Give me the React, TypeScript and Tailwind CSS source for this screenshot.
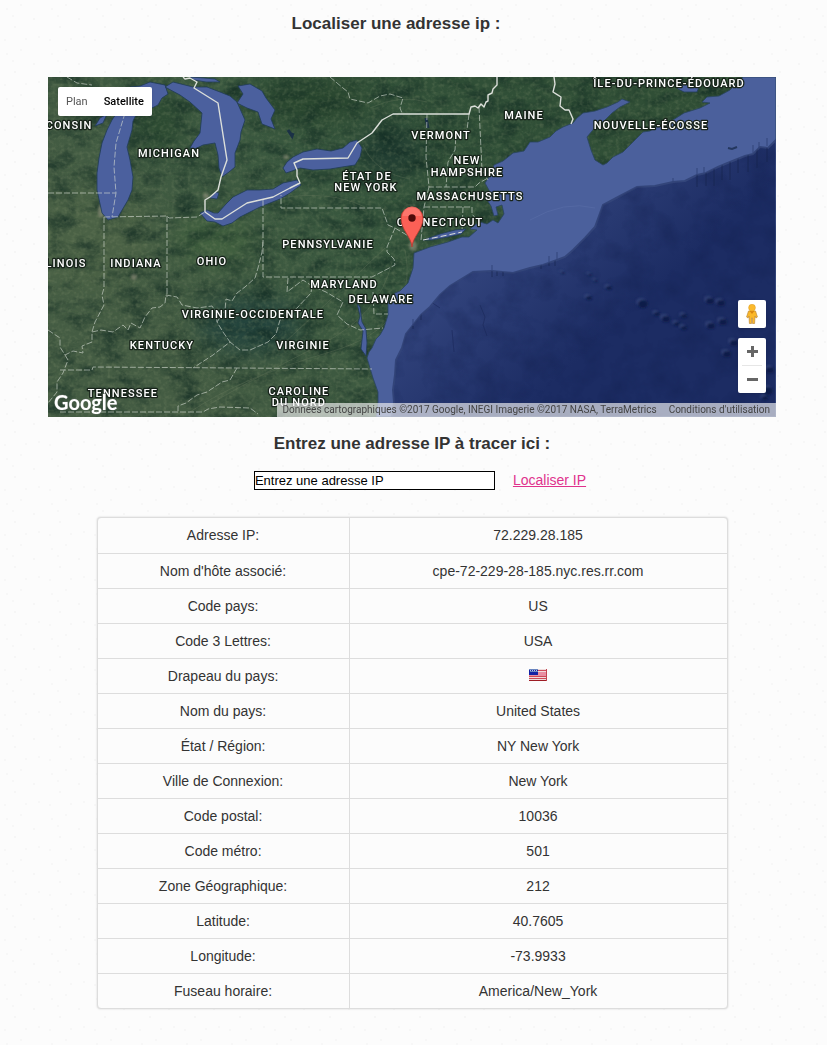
const LABELS: [string, number, number][] = [
  ['ÎLE-DU-PRINCE-ÉDOUARD', 669, 87],
  ['MAINE', 524, 119],
  ['NOUVELLE-ÉCOSSE', 651, 129],
  ['VERMONT', 441, 139],
  ['MICHIGAN', 169, 157],
  ['NEW', 467, 164],
  ['HAMPSHIRE', 467, 176],
  ['ÉTAT DE', 367, 180],
  ['NEW YORK', 366, 191],
  ['MASSACHUSETTS', 470, 200],
  ['CONNECTICUT', 440, 226],
  ['PENNSYLVANIE', 328, 248],
  ['INDIANA', 136, 267],
  ['OHIO', 212, 265],
  ['CONSIN', 69, 129],
  ['LINOIS', 66, 267],
  ['MARYLAND', 344, 288],
  ['DELAWARE', 381, 303],
  ['VIRGINIE-OCCIDENTALE', 253, 318],
  ['KENTUCKY', 162, 349],
  ['VIRGINIE', 303, 349],
  ['TENNESSEE', 123, 397],
  ['CAROLINE', 299, 395],
  ['DU NORD', 299, 406],
];

const LAKES = [
  'M108 220 L102 213 L97 190 L97 173 L99 158 L102 143 L107 130 L112 120 L122 105 L130 87 L140 86 L150 82 L165 85 L168 94 L162 98 L158 105 L148 110 L137 113 L133 121 L132 130 L127 147 L130 160 L133 177 L132 190 L128 200 L118 217 Z',
  'M95 126 L100 118 L107 114 L103 123 Z',
  'M165 87 L173 82 L193 87 L207 87 L220 92 L230 96 L237 102 L245 120 L241 132 L240 140 L235 153 L235 167 L229 172 L222 177 L219 168 L218 155 L215 143 L203 145 L195 149 L190 148 L194 141 L200 133 L202 113 L190 102 L180 95 Z',
  'M190 77 L204 78 L215 79 L220 82 L206 82 L194 80 Z',
  'M237 103 L243 94 L238 86 L250 84 L262 91 L266 98 L275 110 L271 119 L275 129 L262 124 L258 112 L247 108 Z',
  'M200 213 L207 210 L214 213 L218 213 L226 204 L233 197 L247 190 L260 190 L273 189 L283 183 L297 180 L301 185 L290 193 L280 199 L260 207 L240 217 L232 223 L223 226 L215 222 L207 221 Z',
  'M210 198 L215 192 L219 193 L217 199 Z',
  'M283 168 L287 162 L293 157 L303 152 L317 149 L331 151 L343 148 L350 142 L357 140 L362 148 L360 157 L355 165 L342 167 L330 169 L313 170 L300 168 L292 171 L286 173 Z',
];

const OCEAN =
  'M376 417 L378 402 L378 392 L373 378 L367 358 L369 352 L372 348 L376 339 L380 335 L384 328 L388 315 L388 302 L395 293 L400 291 L408 283 L413 268 L414 253 L430 247 L448 242 L462 237 L469 237 L477 230 L470 229 L473 226 L480 222 L487 224 L493 220 L498 223 L504 214 L502 205 L496 207 L498 215 L494 216 L491 206 L487 200 L490 192 L485 183 L491 174 L494 165 L503 161 L513 153 L524 151 L530 142 L538 142 L550 137 L556 131 L563 127 L573 123 L577 118 L583 113 L595 111 L607 107 L618 102 L622 99 L630 102 L620 107 L612 113 L604 121 L597 125 L587 137 L591 150 L595 160 L603 165 L607 163 L613 157 L623 152 L633 142 L643 132 L650 131 L658 125 L673 120 L684 113 L700 108 L710 103 L702 102 L707 97 L719 96 L730 90 L737 83 L743 77 L776 77 V417 Z';

const DEEP =
  'M776 140 L768 148 L760 147 L753 154 L745 156 L730 162 L718 167 L706 173 L697 175 L685 181 L673 182 L655 186 L637 187 L620 196 L603 205 L599 216 L595 227 L585 238 L573 250 L565 257 L557 260 L543 265 L530 268 L513 273 L492 271 L473 272 L463 278 L450 286 L440 295 L430 307 L421 315 L413 325 L406 334 L402 348 L396 360 L395 375 L393 390 L394 402 L392 417 H776 Z';

const STATE_LINES = [
  'M67 77 L77 83 L92 85',
  'M125 113 L116 143 L114 167 L116 193 L112 217',
  'M48 193 H116',
  'M104 217 L167 216 L169 218 L197 217 L205 212',
  'M104 217 V288 L102 295 L104 305 L95 322 L92 332',
  'M167 216 V297',
  'M48 330 L60 338 L60 347 L65 355 L73 351 L83 353 L82 346 L92 342 L92 332 L101 330 L113 332 L123 325 L128 330 L131 323 L140 328 L145 317 L152 308 L160 307 L165 303 L166 295 L177 297 L182 305 L197 308 L212 306 L216 312 L217 322 L223 332 L230 342',
  'M65 355 L68 360 L63 373 L57 382 L57 392 L48 403',
  'M217 322 L225 310 L226 299 L232 301 L237 293 L245 287 L255 278 L258 268 L262 252 L263 240',
  'M263 200 V277 H372 L395 265 L394 259 L387 252 L387 247 L395 228 L388 225 L382 208 H281 V195',
  'M395 228 L410 237',
  'M288 278 L287 292 L303 280 L312 286 L326 292 L343 302 L337 315 L347 324 L360 330 L383 328',
  'M312 286 L311 293 L297 308 L285 318 L280 320 L276 334 L268 342 L250 350 L240 350 L230 342 L213 355 L193 368',
  'M373 292 L374 314 H388',
  'M60 370 H92 L93 367 L237 368 L372 369',
  'M237 368 L230 380 L222 382 L207 392 L197 395 L186 403 L178 406 V412',
  'M60 412 H203 L208 409 L220 407 L250 408 L258 414',
  'M330 77 L343 88 L348 92 L350 99 L368 103 L380 96 L390 94 L403 98 L400 108 L402 113',
  'M427 114 L426 157 L429 187 H475 L479 183 L488 178',
  'M469 114 L467 130 L456 134 L455 150 L448 162 L446 187',
  'M479 107 L482 170 L488 180',
  'M429 187 L424 207 L421 240',
  'M424 207 H472 L472 214 L477 220',
  'M463 207 L462 231',
];

const BORDERS = [
  'M183 77 L185 79 L190 78 L197 82 L194 88 L218 103 L227 160 L221 177 L218 190 L210 197 L205 200 V212 L215 219 H222 L247 203 L273 197 L290 188 L300 183 L297 176 L297 170 L294 163 L303 159 L348 158 L357 143 L372 133 L382 120 L393 114 H469 L471 107 L475 106 L478 108 L481 104 L484 107 L486 102 L488 101 L488 95 L492 93 L493 89 L497 85 V77',
  'M554 77 L555 84 L553 92 L561 97 L560 106 L565 110 L569 110 L573 119 L571 124',
];

const SEAMOUNTS: [number, number, number][] = [
  [608, 287, 3], [589, 274, 2], [595, 280, 2], [642, 303, 5], [656, 313, 3],
  [665, 318, 4], [676, 323, 3], [683, 327, 3], [683, 315, 3], [709, 300, 4],
  [720, 302, 4], [710, 325, 4], [722, 321, 4], [733, 342, 4], [726, 353, 4],
  [562, 272, 2], [588, 297, 3], [767, 390, 5], [769, 369, 4], [764, 397, 3],
];

const ROWS: [string, string][] = [
  ['Adresse IP:', '72.229.28.185'],
  ["Nom d'hôte associé:", 'cpe-72-229-28-185.nyc.res.rr.com'],
  ['Code pays:', 'US'],
  ['Code 3 Lettres:', 'USA'],
  ['Drapeau du pays:', 'flag'],
  ['Nom du pays:', 'United States'],
  ['État / Région:', 'NY New York'],
  ['Ville de Connexion:', 'New York'],
  ['Code postal:', '10036'],
  ['Code métro:', '501'],
  ['Zone Géographique:', '212'],
  ['Latitude:', '40.7605'],
  ['Longitude:', '-73.9933'],
  ['Fuseau horaire:', 'America/New_York'],
];

function Terrain() {
  return (
    <svg
      viewBox="48 77 728 340"
      preserveAspectRatio="xMidYMid slice"
      className="block h-[340px] w-full bg-[#304f39]"
      aria-hidden="true"
    >
      <defs>
        <linearGradient id="land" x1="0" y1="0.3" x2="1" y2="0">
          <stop offset="0" stopColor="#445c43" />
          <stop offset="0.35" stopColor="#38573e" />
          <stop offset="0.6" stopColor="#304f37" />
          <stop offset="1" stopColor="#304e35" />
        </linearGradient>
        <linearGradient id="deep" gradientUnits="userSpaceOnUse" x1="480" y1="230" x2="590" y2="350">
          <stop offset="0" stopColor="#34467f" />
          <stop offset="1" stopColor="#1c2c63" />
        </linearGradient>
        <filter id="relief" x="0" y="0" width="1" height="1" colorInterpolationFilters="sRGB">
          <feTurbulence type="fractalNoise" baseFrequency="0.04 0.07" numOctaves="5" seed="8" />
          <feColorMatrix values="0 0 0 0 0.06  0 0 0 0 0.16  0 0 0 0 0.13  2 0 0 0 -0.85" />
        </filter>
        <filter id="grain" x="0" y="0" width="1" height="1" colorInterpolationFilters="sRGB">
          <feTurbulence type="fractalNoise" baseFrequency="0.25" numOctaves="3" seed="3" />
          <feColorMatrix values="0 0 0 0 0.5  0 0 0 0 0.56  0 0 0 0 0.42  0 1.5 0 0 -0.65" />
        </filter>
        <filter id="swell" x="0" y="0" width="1" height="1" colorInterpolationFilters="sRGB">
          <feTurbulence type="fractalNoise" baseFrequency="0.04" numOctaves="4" seed="5" />
          <feColorMatrix values="0 0 0 0 0.07  0 0 0 0 0.12  0 0 0 0 0.3  1.2 0 0 0 -0.5" />
        </filter>
        <filter id="soft" colorInterpolationFilters="sRGB"><feGaussianBlur stdDeviation="12" /></filter>
        <filter id="soft-small"><feGaussianBlur stdDeviation="1" /></filter>
        <clipPath id="deep-clip"><path d={DEEP} /></clipPath>
      </defs>

      <rect x="48" y="77" width="728" height="340" fill="url(#land)" />
      <g filter="url(#soft)">
        <ellipse cx="250" cy="325" rx="52" ry="28" fill="#24443d" />
        <ellipse cx="90" cy="240" rx="65" ry="50" fill="#4a6145" />
        <ellipse cx="215" cy="240" rx="40" ry="25" fill="#41603f" />
        <ellipse cx="390" cy="153" rx="34" ry="24" fill="#203c31" />
        <ellipse cx="310" cy="100" rx="60" ry="24" fill="#29462f" />
        <ellipse cx="160" cy="122" rx="22" ry="32" fill="#2b4931" />
      </g>
      <rect x="48" y="77" width="728" height="340" filter="url(#relief)" opacity="0.75" />
      <rect x="48" y="77" width="728" height="340" filter="url(#grain)" opacity="0.45" />
      <g fill="none" stroke="#6d7c61" strokeWidth="1" opacity="0.3">
        <path d="M190 412 Q240 378 330 352 T405 250" />
        <path d="M210 404 Q260 375 320 345 T392 262" />
        <path d="M282 345 Q325 305 385 248" />
        <path d="M365 207 Q330 190 280 198" />
        <path d="M363 145 Q375 173 410 179" />
        <path d="M370 108 Q400 94 427 102" />
      </g>
      <g fill="#a6a08c" opacity="0.5" filter="url(#soft-small)">
        <ellipse cx="101" cy="211" rx="3" ry="7" />
        <ellipse cx="206" cy="196" rx="3" ry="3" />
        <ellipse cx="286" cy="157" rx="3" ry="2" />
        <ellipse cx="413" cy="246" rx="4" ry="5" />
        <ellipse cx="134" cy="277" rx="3" ry="3" />
      </g>

      <path d={OCEAN} fill="#4b609c" stroke="#2a4560" strokeWidth="0.8" />
      <path d={DEEP} fill="url(#deep)" stroke="#33457a" strokeWidth="2" />
      <g clipPath="url(#deep-clip)">
        <rect x="380" y="130" width="396" height="287" filter="url(#swell)" opacity="0.6" />
        <path
          d="M413 320 v9 M421 312 v8 M492 268 v9 M497 266 v10 M503 268 v8 M541 262 v7 M549 258 v8 M555 257 v9 M697 175 v12 M706 170 v16 M714 168 v18 M722 165 v15 M730 160 v20 M738 158 v15 M748 154 v18 M757 149 v19 M767 144 v18"
          stroke="#16224d"
          opacity="0.6"
        />
        <path d="M480 305 l5 12 l-2 8 l4 11 M452 330 l2 22 M428 300 l12 8" fill="none" stroke="#1a285a" opacity="0.6" />
      </g>
      <path d="M753 145 v8 M759 142 v6 M767 138 v8 M697 168 v7 M704 167 v6 M673 178 v5 M557 252 v8 M549 256 v6 M492 265 v6 M413 319 v7" fill="none" stroke="#33457a" />
      <path d="M728 148 l4 1 l5 -2" fill="none" stroke="#24375f" strokeWidth="2" />
      <path d="M530 220 Q565 200 595 208" fill="none" stroke="#5c70aa" opacity="0.5" />
      <g filter="url(#soft-small)">
        {SEAMOUNTS.map(([x, y, r]) => (
          <g key={`${x}-${y}`}>
            <ellipse cx={x - 1} cy={y - 1} rx={r} ry={r - 1} fill="#3c4e82" opacity="0.6" />
            <ellipse cx={x + 1} cy={y + 1} rx={r} ry={r - 1} fill="#111c49" />
          </g>
        ))}
      </g>

      <g fill="#4b609e" stroke="#213c57" strokeWidth="0.8">
        {LAKES.map((d) => <path key={d} d={d} />)}
        <path d="M357 303 L360 316 L358 323 L363 331 L361 349 L366 356 L367 343 L366 329 L362 322 L360 307 Z" />
        <path d="M423 240 L440 234 L455 230 L466 229 L461 234 L448 237 L432 240 Z" />
        <path d="M673 84 L684 82 L690 88 L699 87 L697 92 L684 92 L678 89 Z" />
      </g>
      <path d="M288 130 l4 6 l1 -3 M426 118 l2 10" fill="none" stroke="#1b3146" strokeWidth="3" />

      <g fill="none" stroke="#d6dcd3" strokeWidth="1" strokeDasharray="6 2" opacity="0.62">
        {STATE_LINES.map((d) => <path key={d} d={d} />)}
      </g>
      <g fill="none" stroke="#dcdfda" strokeWidth="1.4" strokeLinejoin="round">
        {BORDERS.map((d) => <path key={d} d={d} />)}
        <path d="M423 240 L443 236 L462 232" strokeWidth="1" strokeDasharray="6 3" />
      </g>

      <g
        className="font-['Roboto',sans-serif] text-[11px] font-medium tracking-widest"
        fill="#fff"
        stroke="#18241b"
        strokeWidth="2.6"
        strokeLinejoin="round"
        paintOrder="stroke"
        textAnchor="middle"
      >
        {LABELS.map(([name, x, y]) => <text key={name} x={x} y={y}>{name}</text>)}
      </g>

      <path
        d="M412 247 C411 236 401 230 401 218 A11 11 0 0 1 423 218 C423 230 413 236 412 247 Z"
        fill="#fb6056"
        stroke="#b8392f"
        strokeWidth="0.8"
      />
      <path d="M402.5 216 A9.5 9.5 0 0 1 421.5 216 Z" fill="#ff8178" opacity="0.65" />
      <circle cx="412" cy="218" r="3.7" fill="#4e0909" />

      <text
        x="54"
        y="410"
        className="font-['Lato',sans-serif] text-[20px] font-bold"
        fill="#fff"
        stroke="#5a685c"
        strokeWidth="1"
        paintOrder="stroke"
      >
        Google
      </text>
    </svg>
  );
}

function MapPanel() {
  return (
    <section className="relative mx-auto w-full max-w-[728px] overflow-hidden font-['Roboto',sans-serif]" aria-label="Carte">
      <Terrain />
      <div className="absolute top-[10px] left-[10px] flex h-[29px] rounded-xs bg-white text-[11px] shadow-sm">
        <button type="button" className="px-2 text-[#565656]">Plan</button>
        <button type="button" className="px-2 font-medium text-black">Satellite</button>
      </div>
      <div className="absolute right-[10px] bottom-6 flex w-7 flex-col gap-[10px]">
        <button type="button" aria-label="Street View" className="flex h-7 items-center justify-center rounded-xs bg-white shadow-sm">
          <svg width="12" height="20" viewBox="0 0 12 20" aria-hidden="true">
            <path d="M2.5 7 H9.5 L11.4 13 L10 14 L9 12 L8.6 19.5 H6.5 V14 H5.5 V19.5 H3.4 L3 12 L2 14 L.6 13 Z" fill="#fbb829" stroke="#bd8b3e" strokeWidth="0.7" />
            <path d="M3.6 7 H8.4 L6 10 Z" fill="#d78512" />
            <circle cx="6" cy="3.7" r="3.4" fill="#fcba2d" stroke="#d99c29" strokeWidth="0.5" />
          </svg>
        </button>
        <div className="flex flex-col rounded-xs bg-white shadow-sm">
          <button type="button" aria-label="Zoom avant" className="flex h-[27px] items-center justify-center">
            <svg width="11" height="11" viewBox="0 0 11 11" aria-hidden="true">
              <path d="M0 5.5 H11 M5.5 0 V11" stroke="#666" strokeWidth="3" />
            </svg>
          </button>
          <div className="mx-1 h-px bg-[#e6e6e6]" />
          <button type="button" aria-label="Zoom arrière" className="flex h-[27px] items-center justify-center">
            <svg width="11" height="11" viewBox="0 0 11 11" aria-hidden="true">
              <path d="M0 5.5 H11" stroke="#666" strokeWidth="3" />
            </svg>
          </button>
        </div>
      </div>
      <div className="absolute right-0 bottom-0 flex h-[14px] items-center gap-3 bg-[#f5f5f5]/65 px-[6px] text-[10px] whitespace-nowrap text-[#444]">
        <span>Données cartographiques ©2017 Google, INEGI Imagerie ©2017 NASA, TerraMetrics</span>
        <a href="#conditions">Conditions d'utilisation</a>
      </div>
    </section>
  );
}

function UsFlag() {
  return (
    <svg width="18" height="12" viewBox="0 0 18 12" role="img" aria-label="Drapeau des États-Unis" className="mx-auto mb-[2px] block">
      <rect width="18" height="12" fill="#e88fa2" />
      <path d="M9 .5H18M9 2.5H18M0 8.5H18M0 10.5H18" stroke="#f0dcdc" />
      <path d="M9 1.5H18M0 7.5H18M0 9.5H18" stroke="#cf4a58" />
      <path d="M0 11.5H18" stroke="#9d1c24" />
      <path d="M17.5 0V12" stroke="#c04450" />
      <rect width="9" height="6" fill="#1422a4" />
      <path d="M0 .5H9M1 2.5H9" stroke="#6a86c0" />
      <path d="M1 1.5H8" stroke="#b4c6e4" strokeDasharray="1 1" />
    </svg>
  );
}

export default function App() {
  return (
    <main className="min-h-screen bg-[#fcfcfc] bg-[radial-gradient(circle_at_7px_9px,#f7f7f7_1px,transparent_1px),radial-gradient(circle_at_21px_5px,#f7f7f7_1px,transparent_1px),radial-gradient(circle_at_15px_27px,#f6f6f6_1px,transparent_1px),radial-gradient(circle_at_34px_19px,#f6f6f6_1px,transparent_1px),radial-gradient(circle_at_39px_37px,#f7f7f7_1px,transparent_1px),radial-gradient(circle_at_5px_40px,#f7f7f7_1px,transparent_1px),radial-gradient(circle_at_26px_39px,#f7f7f7_1px,transparent_1px),radial-gradient(circle_at_13px_16px,#f7f7f7_1px,transparent_1px)] bg-size-[45px_45px] pr-[3px] pb-9 font-['Liberation_Sans',Arial,sans-serif] text-sm text-[#333]">
      <h1 className="pt-[13px] pr-8 pb-[42px] text-center text-[17px] leading-[22px] font-bold">Localiser une adresse ip :</h1>
      <MapPanel />
      <h2 className="pt-4 text-center text-[17px] leading-[22px] font-bold">Entrez une adresse IP à tracer ici :</h2>
      <form className="flex items-center justify-center gap-[18px] pt-4 pl-4">
        <input
          type="text"
          aria-label="Adresse IP"
          defaultValue="Entrez une adresse IP"
          className="h-[19px] w-[241px] border border-black bg-white text-[13px] text-black"
        />
        <a href="#localiser" className="leading-[19px] text-[#e0328c] underline">Localiser IP</a>
      </form>
      <div className="mx-auto mt-[27px] w-[calc(100%-192px)] max-w-[631px] overflow-hidden rounded-[4px] border border-[#ddd] bg-[#fcfcfc] shadow-[0_0_2px_#ccc]">
        <table className="w-full border-collapse text-center">
          <tbody>
            {ROWS.map(([label, value]) => (
              <tr key={label} className="h-[35px] border-b border-[#ddd] last:border-b-0">
                <th scope="row" className="w-2/5 border-r border-[#ddd] font-normal">{label}</th>
                <td>{value === 'flag' ? <UsFlag /> : value}</td>
              </tr>
            ))}
          </tbody>
        </table>
      </div>
    </main>
  );
}
